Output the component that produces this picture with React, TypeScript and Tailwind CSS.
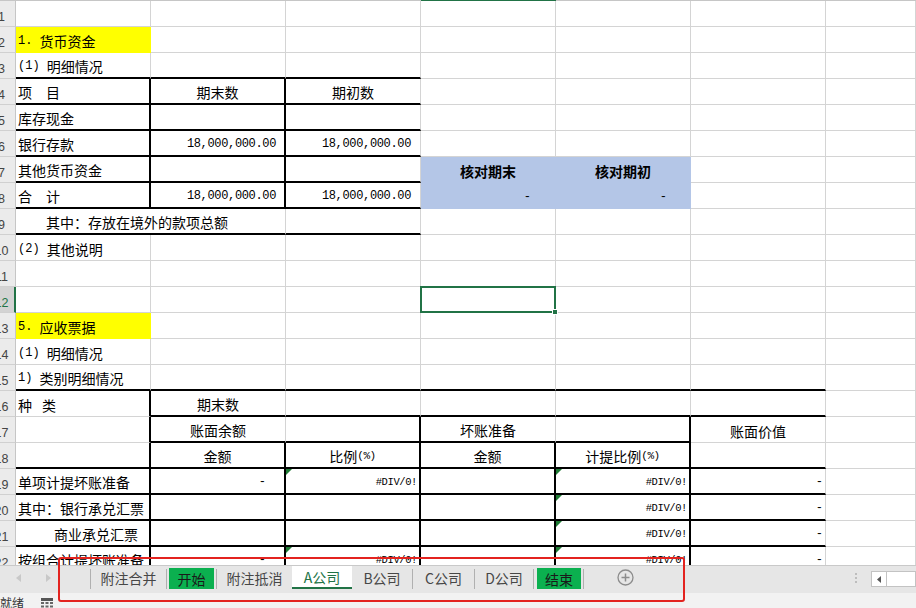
import { ReactNode } from 'react';
import { clsx } from 'clsx';

type Spec = {
  node?: ReactNode;
  pos?: string;
  fill?: 'yellow' | 'blue';
  bold?: boolean;
  tri?: boolean;
  span?: boolean;
};

function M({ children, small = false }: { children: ReactNode; small?: boolean }) {
  return (
    <span className={clsx("font-['Liberation_Mono',monospace] whitespace-pre", small ? 'text-[11px] tracking-[-0.5px]' : 'text-[12px]')}>
      {children}
    </span>
  );
}

const num = <span className="font-['Liberation_Mono',monospace] text-[12px] tracking-[-0.35px]">18,000,000.00</span>;
const dash = <span className="font-['Liberation_Mono',monospace] text-[12px]">-</span>;
const div0 = <span className="font-['Liberation_Mono',monospace] text-[10.5px] tracking-[-0.4px]">#DIV/0!</span>;

const L = 'justify-start pl-[2px]';
const C = 'justify-center';

const cells: Record<string, Spec> = {
  '2-0': { node: <><M>1. </M>货币资金</>, pos: L, fill: 'yellow' },
  '3-0': { node: <><M>(1) </M>明细情况</>, pos: L },
  '4-0': { node: '项\u3000目', pos: L },
  '4-1': { node: '期末数', pos: C },
  '4-2': { node: '期初数', pos: C },
  '5-0': { node: '库存现金', pos: L },
  '6-0': { node: '银行存款', pos: L },
  '6-1': { node: num, pos: 'justify-end pr-[8px]' },
  '6-2': { node: num, pos: 'justify-end pr-[9px]' },
  '7-0': { node: '其他货币资金', pos: L },
  '7-3': { node: '核对期末', pos: C, fill: 'blue', bold: true },
  '7-4': { node: '核对期初', pos: C, fill: 'blue', bold: true },
  '8-0': { node: '合\u3000计', pos: L },
  '8-1': { node: num, pos: 'justify-end pr-[8px]' },
  '8-2': { node: num, pos: 'justify-end pr-[9px]' },
  '8-3': { node: dash, pos: 'justify-end pr-[24px]', fill: 'blue' },
  '8-4': { node: dash, pos: 'justify-end pr-[23px]', fill: 'blue' },
  '9-0': { node: '其中：存放在境外的款项总额', pos: 'justify-start pl-[30px]', span: true },
  '10-0': { node: <><M>(2) </M>其他说明</>, pos: L },
  '13-0': { node: <><M>5. </M>应收票据</>, pos: L, fill: 'yellow' },
  '14-0': { node: <><M>(1) </M>明细情况</>, pos: L },
  '15-0': { node: <><M>1) </M>类别明细情况</>, pos: L },
  '16-0': { node: <>种<span className="ml-[10px]">类</span></>, pos: L },
  '16-1': { node: '期末数', pos: C },
  '17-1': { node: '账面余额', pos: C },
  '17-3': { node: '坏账准备', pos: C },
  '17-5': { node: '账面价值', pos: C },
  '18-1': { node: '金额', pos: C },
  '18-2': { node: <>比例<M small>(%)</M></>, pos: C },
  '18-3': { node: '金额', pos: C },
  '18-4': { node: <>计提比例<M small>(%)</M></>, pos: C },
  '19-0': { node: '单项计提坏账准备', pos: L },
  '19-1': { node: dash, pos: 'justify-end pr-[18px]' },
  '19-2': { node: div0, pos: 'justify-end pr-[2px]', tri: true },
  '19-4': { node: div0, pos: 'justify-end pr-[2px]', tri: true },
  '19-5': { node: dash, pos: 'justify-end pr-[2px]' },
  '20-0': { node: '其中：银行承兑汇票', pos: L },
  '20-4': { node: div0, pos: 'justify-end pr-[2px]', tri: true },
  '20-5': { node: dash, pos: 'justify-end pr-[2px]' },
  '21-0': { node: '商业承兑汇票', pos: 'justify-start pl-[38px]' },
  '21-4': { node: div0, pos: 'justify-end pr-[2px]', tri: true },
  '21-5': { node: dash, pos: 'justify-end pr-[2px]' },
  '22-0': { node: '按组合计提坏账准备', pos: L },
  '22-1': { node: dash, pos: 'justify-end pr-[18px]' },
  '22-2': { node: div0, pos: 'justify-end pr-[2px]', tri: true },
  '22-4': { node: div0, pos: 'justify-end pr-[2px]', tri: true },
  '22-5': { node: dash, pos: 'justify-end pr-[2px]' },
};

// thick black rules of the two tables
function blackBottom(r: number, c: number) {
  if (r >= 3 && r <= 9) return c <= 2;
  if (r === 15) return c <= 5;
  if (r === 16) return c >= 1 && c <= 5;
  if (r === 17) return c >= 1 && c <= 4;
  if (r >= 18) return c <= 5;
  return false;
}

function blackRight(r: number, c: number) {
  if (c === 0) return (r >= 4 && r <= 8) || r >= 16;
  if (c === 1) return (r >= 4 && r <= 9) || r >= 18;
  if (c === 2) return r >= 17;
  if (c === 3) return r >= 18;
  if (c === 4) return r >= 17;
  return false;
}

function Cell({ r, c }: { r: number; c: number }) {
  const spec = cells[`${r}-${c}`] ?? {};
  const bb = blackBottom(r, c);
  const br = blackRight(r, c);
  const selected = r === 12 && c === 3;
  return (
    <div
      className={clsx(
        'relative flex items-center pt-[2px] whitespace-nowrap text-[14px] leading-none text-black',
        spec.pos,
        spec.span && 'col-span-2',
        spec.bold && 'font-bold',
        spec.fill === 'yellow' && 'bg-[#ffff00]',
        spec.fill === 'blue' && 'bg-[#b4c6e7]',
        bb ? 'border-b-2 border-b-black' : 'border-b',
        br ? 'border-r-2 border-r-black' : 'border-r',
        !bb && (spec.fill === 'yellow' ? 'border-b-[#ffff00]' : spec.fill === 'blue' ? 'border-b-[#b4c6e7]' : 'border-b-[#d4d4d4]'),
        !br && (spec.fill === 'yellow' ? 'border-r-[#ffff00]' : spec.fill === 'blue' ? 'border-r-[#b4c6e7]' : 'border-r-[#d4d4d4]'),
      )}
    >
      {spec.tri && (
        <span className="absolute left-0 top-0 w-0 h-0 border-t-[6px] border-r-[6px] border-t-[#1e7b34] border-r-transparent" />
      )}
      {spec.node}
      {selected && (
        <div className="absolute -left-[1px] -top-[1px] -right-[1px] -bottom-[1px] z-10 border-2 border-[#217346]">
          <span className="absolute -right-[4px] -bottom-[4px] w-[6px] h-[6px] bg-[#217346] border border-white" />
        </div>
      )}
    </div>
  );
}

function Row({ r }: { r: number }) {
  const sel = r === 12;
  const cols = [0, 1, 2, 3, 4, 5, 6].filter((c) => !(r === 9 && c === 1));
  return (
    <>
      <div
        className={clsx(
          'flex items-end pb-[3px] overflow-hidden border-b border-b-[#d0d0d0]',
          sel ? 'bg-[#d3d3d3] border-r-2 border-r-[#217346]' : 'bg-[#ebebeb] border-r border-r-[#c6c6c6]',
        )}
      >
        <span className={clsx("w-[31px] -ml-[14px] shrink-0 text-center text-[12.5px] leading-none font-['Liberation_Sans',sans-serif]", sel ? 'text-[#217346]' : 'text-[#444]')}>
          {r}
        </span>
      </div>
      {cols.map((c) => (
        <Cell key={c} r={r} c={c} />
      ))}
    </>
  );
}

function Sep() {
  return <div className="mt-[3px] h-[20px] w-px shrink-0 bg-[#b0b0b0]" />;
}

function Tab({ children, w }: { children: ReactNode; w: string }) {
  return <div className={clsx('h-[23px] shrink-0 flex items-center justify-center', w)}>{children}</div>;
}

function GreenTab({ children, w, inner }: { children: ReactNode; w: string; inner: string }) {
  return (
    <div className={clsx('h-[23px] shrink-0 flex items-start', w)}>
      <div className={clsx('mt-[2px] h-[21px] bg-[#0bb04f] text-[#1a1a1a] flex items-center justify-center', inner)}>{children}</div>
    </div>
  );
}

export default function App() {
  const rows = Array.from({ length: 22 }, (_, i) => i + 1);
  return (
    <div className="relative w-[916px] h-[608px] overflow-hidden bg-white flex flex-col font-['Noto_Sans_CJK_SC',sans-serif]">
      {/* sheet */}
      <div className="h-[565px] shrink-0 overflow-hidden">
        <div className="flex h-px">
          <div className="w-[421px] bg-[#c6c6c6]" />
          <div className="w-[135px] bg-[#217346]" />
          <div className="flex-1 bg-[#c6c6c6]" />
        </div>
        <div className="grid grid-cols-[16px_135px_135px_135px_135px_135px_135px_1fr] auto-rows-[26px]">
          {rows.map((r) => (
            <Row key={r} r={r} />
          ))}
        </div>
      </div>

      {/* sheet tabs */}
      <div className="h-[28px] shrink-0 bg-[#e6e6e6] border-t border-[#c9c9c9] flex items-start text-[14px] leading-none text-[#474747]">
        <div className="w-[90px] h-[23px] shrink-0 flex items-center">
          <svg width="6" height="8" viewBox="0 0 6 8" className="ml-[16px]">
            <path d="M5 0 L0 4 L5 8 Z" fill="#c8c8c8" />
          </svg>
          <svg width="6" height="8" viewBox="0 0 6 8" className="ml-[23px]">
            <path d="M1 0 L6 4 L1 8 Z" fill="#c8c8c8" />
          </svg>
        </div>
        <Sep />
        <Tab w="w-[75px]">附注合并</Tab>
        <Sep />
        <GreenTab w="w-[49px]" inner="ml-[2px] w-[45px]">开始</GreenTab>
        <Sep />
        <Tab w="w-[75px]">附注抵消</Tab>
        <div className="h-[23px] w-[60px] shrink-0 bg-white border-b-2 border-[#217346] flex items-center justify-center text-[#217346]">
          A公司
        </div>
        <Tab w="w-[60px]">B公司</Tab>
        <Sep />
        <Tab w="w-[61px]">C公司</Tab>
        <Sep />
        <Tab w="w-[58px]">D公司</Tab>
        <Sep />
        <GreenTab w="w-[49px]" inner="ml-[3px] w-[44px]">结束</GreenTab>
        <Sep />
        <div className="ml-[33px] h-[23px] flex items-center">
          <svg width="17" height="17" viewBox="0 0 17 17">
            <circle cx="8.5" cy="8.5" r="7.5" fill="none" stroke="#8c8c8c" strokeWidth="1.3" />
            <path d="M8.5 4.5 V12.5 M4.5 8.5 H12.5" stroke="#8c8c8c" strokeWidth="1.5" />
          </svg>
        </div>
        <div className="ml-auto mr-[14px] h-[23px] flex flex-col justify-center gap-[2px]">
          <span className="w-[2px] h-[2px] bg-[#bdbdbd]" />
          <span className="w-[2px] h-[2px] bg-[#bdbdbd]" />
          <span className="w-[2px] h-[2px] bg-[#bdbdbd]" />
        </div>
        <div className="mt-[5px] w-[45px] h-[16px] bg-white border border-[#c3c3c3] flex">
          <div className="w-[15px] h-full border-r border-[#c3c3c3] flex items-center justify-center">
            <svg width="4" height="7" viewBox="0 0 4 7">
              <path d="M4 0 L0 3.5 L4 7 Z" fill="#555" />
            </svg>
          </div>
        </div>
      </div>

      {/* status bar */}
      <div className="flex-1 bg-[#f2f2f2] flex items-start pt-[4px] text-[12px] leading-none text-[#333]">
        <span>就绪</span>
        <svg width="12" height="12" viewBox="0 0 12 12" className="ml-[17px] mt-[1px]">
          <rect x="0" y="0" width="12" height="3" fill="#555" />
          <rect x="0" y="4" width="3" height="2" fill="#666" />
          <rect x="4.5" y="4" width="3" height="2" fill="#666" />
          <rect x="9" y="4" width="3" height="2" fill="#666" />
          <rect x="0" y="7.5" width="3" height="2" fill="#666" />
          <rect x="4.5" y="7.5" width="3" height="2" fill="#666" />
          <rect x="9" y="7.5" width="3" height="2" fill="#666" />
        </svg>
      </div>

      {/* red annotation box */}
      <div className="absolute left-[58px] top-[557px] w-[627px] h-[45px] border-[2.5px] border-[#e3231f] rounded-[3px] pointer-events-none" />
    </div>
  );
}
